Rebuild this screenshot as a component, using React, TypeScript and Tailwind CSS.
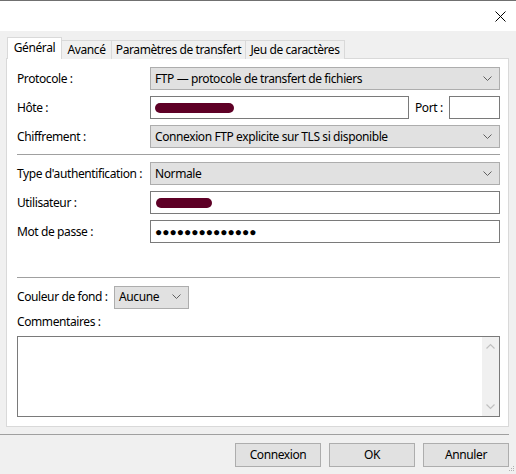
import React from "react";

const Chevron = () => (
  <svg width="9" height="6" viewBox="0 0 9 6" className="shrink-0">
    <polyline points="0.5,0.5 4.5,4.5 8.5,0.5" fill="none" stroke="#606060" strokeWidth="1" />
  </svg>
);

const Select = ({ text, className = "" }: { text: string; className?: string }) => (
  <div
    className={`h-[23px] bg-[#e1e1e1] border border-[#adadad] flex items-center pl-[4px] pr-[7px] justify-between ${className}`}
  >
    <span className="text-black">{text}</span>
    <Chevron />
  </div>
);

const Blob = ({ w }: { w: number }) => (
  <div className="h-[10px] rounded-full bg-[#5e0026]" style={{ width: w }} />
);

const Row = ({ label, children }: { label: string; children: React.ReactNode }) => (
  <div className="flex items-center h-[23px]">
    <div className="w-[133px] shrink-0">{label}</div>
    <div className="flex-1 flex items-center">{children}</div>
  </div>
);

export default function App() {
  return (
    <div
      className="w-[516px] h-[474px] bg-[#f0f0f0] flex flex-col text-[12px] tracking-[-0.4px] whitespace-nowrap text-black border-t border-[#707070] overflow-hidden"
      style={{ fontFamily: '"Noto Sans", "Open Sans", sans-serif' }}
    >
      {/* Title bar */}
      <div className="h-[30px] bg-white flex items-center justify-end pr-[10px] shrink-0">
        <svg width="11" height="11" viewBox="0 0 11 11">
          <line x1="0.5" y1="0.5" x2="10.5" y2="10.5" stroke="#000" strokeWidth="1" />
          <line x1="10.5" y1="0.5" x2="0.5" y2="10.5" stroke="#000" strokeWidth="1" />
        </svg>
      </div>

      {/* Body */}
      <div className="flex flex-col pl-[6px] pt-[6px]">
        {/* Tabs */}
        <div className="flex items-end h-[22px] relative z-10 -mb-px">
          <div className="h-[22px] w-[55px] ml-px bg-white border border-b-0 border-[#d9d9d9] flex items-center justify-center pb-[2px]">
            Général
          </div>
          <div className="h-[19px] w-[50px] bg-[#f0f0f0] border border-l-0 border-b-0 border-[#d9d9d9] flex items-center justify-center">
            Avancé
          </div>
          <div className="h-[19px] w-[134px] bg-[#f0f0f0] border border-l-0 border-b-0 border-[#d9d9d9] flex items-center justify-center">
            Paramètres de transfert
          </div>
          <div className="h-[19px] w-[99px] bg-[#f0f0f0] border border-l-0 border-b-0 border-[#d9d9d9] flex items-center justify-center">
            Jeu de caractères
          </div>
        </div>

        {/* Panel */}
        <div className="w-[503px] h-[369px] bg-white border border-[#d9d9d9] pl-[10px] pr-[8px] pt-[8px] flex flex-col">
          <div className="flex flex-col gap-[6px]">
            <Row label="Protocole :">
              <Select text="FTP — protocole de transfert de fichiers" className="flex-1" />
            </Row>
            <Row label="Hôte :">
              <div className="w-[259px] h-[23px] border border-[#7a7a7a] bg-white flex items-center pl-[4px]">
                <Blob w={79} />
              </div>
              <div className="w-[40px] pl-[6px]">Port :</div>
              <div className="flex-1 h-[23px] border border-[#7a7a7a] bg-white" />
            </Row>
            <Row label="Chiffrement :">
              <Select text="Connexion FTP explicite sur TLS si disponible" className="flex-1" />
            </Row>
          </div>

          <div className="h-px bg-[#a0a0a0] mt-[6px] mb-[7px]" />

          <div className="flex flex-col gap-[6px]">
            <Row label="Type d'authentification :">
              <Select text="Normale" className="flex-1" />
            </Row>
            <Row label="Utilisateur :">
              <div className="flex-1 h-[23px] border border-[#7a7a7a] bg-white flex items-center pl-[5px]">
                <Blob w={56} />
              </div>
            </Row>
            <Row label="Mot de passe :">
              <div className="flex-1 h-[23px] border border-[#7a7a7a] bg-white flex items-center pl-[4px] text-[12px] tracking-[0px]">
                ●●●●●●●●●●●●●●
              </div>
            </Row>
          </div>

          <div className="h-px bg-[#a0a0a0] mt-[34px]" />

          <div className="flex items-center mt-[8px] h-[22px]">
            <div className="w-[97px]">Couleur de fond :</div>
            <Select text="Aucune" className="w-[75px] h-[22px]" />
          </div>

          <div className="mt-[6px] h-[16px] flex items-center">Commentaires :</div>

          <div className="mt-[6px] h-[81px] border border-[#7a7a7a] bg-white flex justify-end">
            <div className="w-[17px] h-full bg-[#f0f0f0] flex flex-col items-center justify-between py-[6px]">
              <svg width="9" height="6" viewBox="0 0 9 6">
                <polyline points="0.5,5.5 4.5,1.5 8.5,5.5" fill="none" stroke="#c0c0c0" strokeWidth="1.2" />
              </svg>
              <svg width="9" height="6" viewBox="0 0 9 6">
                <polyline points="0.5,0.5 4.5,4.5 8.5,0.5" fill="none" stroke="#c0c0c0" strokeWidth="1.2" />
              </svg>
            </div>
          </div>
        </div>
      </div>

      {/* Bottom separator */}
      <div className="h-px bg-[#a0a0a0] w-[509px] mt-[7px]" />

      {/* Buttons */}
      <div className="flex justify-end gap-[8px] pr-[7px] mt-[8px] relative">
        <button className="w-[86px] h-[24px] bg-[#e1e1e1] border border-[#adadad]">Connexion</button>
        <button className="w-[86px] h-[24px] bg-[#e1e1e1] border border-[#adadad]">OK</button>
        <button className="w-[86px] h-[24px] bg-[#e1e1e1] border border-[#adadad]">Annuler</button>
        <svg width="6" height="6" viewBox="0 0 6 6" className="absolute right-[1px] bottom-[-5px]">
          <rect x="4" y="0" width="1" height="1" fill="#b0b0b0" />
          <rect x="2" y="2" width="1" height="1" fill="#b0b0b0" />
          <rect x="4" y="2" width="1" height="1" fill="#b0b0b0" />
          <rect x="0" y="4" width="1" height="1" fill="#b0b0b0" />
          <rect x="2" y="4" width="1" height="1" fill="#b0b0b0" />
          <rect x="4" y="4" width="1" height="1" fill="#b0b0b0" />
        </svg>
      </div>
    </div>
  );
}
